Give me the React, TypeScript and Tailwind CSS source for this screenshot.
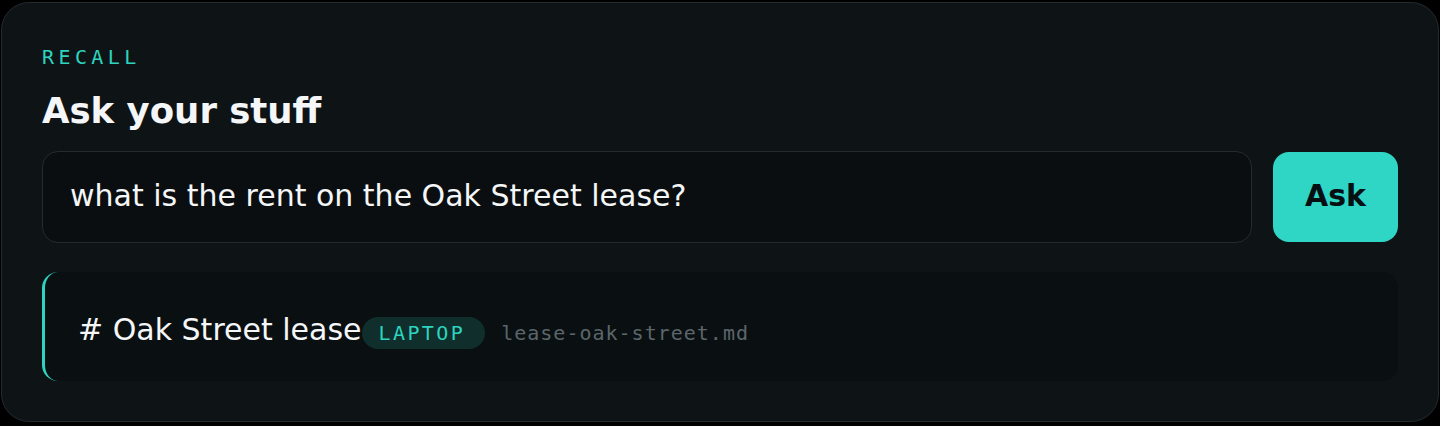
import { useState } from "react"

const sans = "font-['DejaVu_Sans','Noto_Sans',sans-serif]"
const mono = "font-['DejaVu_Sans_Mono','Liberation_Mono',monospace]"

interface Hit {
  title: string
  device: string
  file: string
}

function ResultCard({ hit }: { hit: Hit }) {
  return (
    <div className="mt-[29px] h-[109px] rounded-2xl border-l-[3px] border-[#2dd4bf] bg-[#0a0f11] pl-[33px] pt-[35px]">
      <div className="flex items-baseline">
        <span className={`${sans} text-[30px] leading-[45px] text-[#f4f6f7]`}>{hit.title}</span>
        <span
          className={`${mono} rounded-full bg-[#0f2e2c] pl-[17px] pr-5 text-[20px] leading-[32px] tracking-[0.12em] text-[#2dd4bf]`}
        >
          {hit.device}
        </span>
        <span className={`${mono} ml-4 text-[20px] tracking-[0.05em] text-[#5b666b]`}>{hit.file}</span>
      </div>
    </div>
  )
}

export default function App() {
  const [query, setQuery] = useState("what is the rent on the Oak Street lease?")
  const hit: Hit = { title: "# Oak Street lease", device: "LAPTOP", file: "lease-oak-street.md" }

  return (
    <div className="min-h-screen bg-black px-[1px] py-[2px]">
      <div className="rounded-[28px] border border-[#232b30] bg-[#0e1316] p-10">
        <div className={`${mono} text-[20px] leading-7 tracking-[0.22em] text-[#2dd4bf]`}>RECALL</div>
        <h1 className={`${sans} mt-[19px] text-[35.5px] font-bold leading-[42px] text-[#f4f6f7]`}>Ask your stuff</h1>

        <div className="mt-[19px] flex items-center gap-[21px]">
          <input
            value={query}
            onChange={(e) => setQuery(e.target.value)}
            className={`${sans} h-[92px] flex-1 rounded-2xl border border-[#242b2f] bg-[#0a0e10] pb-[3px] pl-[27px] pr-6 text-[30px] text-[#f4f6f7] outline-none`}
          />
          <button
            className={`${sans} h-[90px] w-[125px] rounded-2xl bg-[#2fd5c5] pb-[3px] text-[30px] font-bold text-[#061012]`}
          >
            Ask
          </button>
        </div>

        <ResultCard hit={hit} />
      </div>
    </div>
  )
}
